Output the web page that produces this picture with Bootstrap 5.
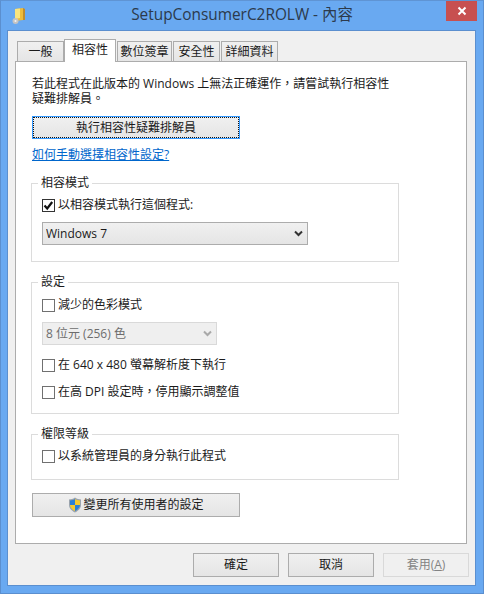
<!DOCTYPE html>
<html lang="zh-Hant">
<head>
    <meta charset="UTF-8">
    <title>SetupConsumerC2ROLW - 內容</title>
    <link href="https://cdn.jsdelivr.net/npm/bootstrap@5.3.0/dist/css/bootstrap.min.css" rel="stylesheet">
    <style>
        body {
            margin: 0;
            background: #69a9f1;
            font-family: "Open Sans", "Noto Sans CJK TC", sans-serif;
            font-size: 12px;
            color: #1a1a1a;
        }

        .win-frame {
            width: 484px;
            height: 594px;
            background: #69a9f1;
            border: 1px solid #5b8fcf;
            border-top-color: #5f94d4;
        }

        .win-title {
            height: 29px;
            position: relative;
            font-size: 15.4px;
            color: #2c3a4c;
            line-height: 28px;
            text-align: center;
        }

        .win-icon {
            position: absolute;
            left: 11px;
            top: 6px;
        }

        .win-close {
            position: absolute;
            right: 6px;
            top: 0;
            width: 31px;
            height: 20px;
            background: #c75050;
            display: flex;
            align-items: center;
            justify-content: center;
        }

        .win-client {
            margin: 0 7px 0 6px;
            height: 556px;
            background: #f0f0f0;
            border: 1px solid #5b8fcf;
            padding: 8px 9px 0 7px;
        }

        .tab-strip {
            height: 22px;
            border: 0;
            padding-left: 2px;
            gap: 0;
            align-items: flex-end;
            position: relative;
            z-index: 1;
        }

        .tab-strip .nav-link {
            height: 20px;
            margin: 0 1px 0 0;
            padding: 0;
            border: 1px solid #acacac;
            border-bottom: 0;
            border-radius: 0;
            background: linear-gradient(#f0f0f0, #e5e5e5);
            color: #1a1a1a;
            font-size: 12px;
            line-height: 20px;
            text-align: center;
        }

        .tab-strip .nav-link.active {
            height: 23px;
            margin: 0 1px -1px -1px;
            background: #fff;
            border-color: #acacac;
            color: #1a1a1a;
            line-height: 19px;
        }

        .tw-general { width: 47px; }
        .tw-compat { width: 52px; }
        .tw-sign { width: 55px; }
        .tw-safe { width: 47px; }
        .tw-detail { width: 57px; }

        .tab-body {
            width: 452px;
            height: 483px;
            background: #fff;
            border: 1px solid #acacac;
            padding: 14px 15px 0 16px;
        }

        .intro-text {
            width: 362px;
            line-height: 15px;
            margin: 0 0 10px;
        }

        .win-btn {
            background: linear-gradient(#f0f0f0, #e5e5e5);
            border: 1px solid #acacac;
            border-radius: 0;
            color: #1a1a1a;
            font-size: 12px;
            line-height: 16px;
            padding: 0;
        }

        .btn-trouble {
            display: block;
            width: 208px;
            height: 23px;
            border: 1px solid #3399ff;
            outline: 1px dotted #111;
            outline-offset: -2px;
        }

        .help-link {
            display: block;
            margin-top: 8px;
            line-height: 16px;
            color: #0066cc;
        }

        .group-box {
            width: 368px;
            margin-left: -1px;
            border: 1px solid #dcdcdc;
            padding: 0 9px 0 10px;
        }

        .group-box legend {
            float: none;
            width: auto;
            margin: 0 0 0 -4px;
            padding: 0 3px;
            font-size: 12px;
            line-height: 16px;
        }

        .group-compat { margin-top: 12px; height: 87px; }
        .group-settings { margin-top: 12px; height: 140px; }
        .group-priv { margin-top: 12px; height: 54px; }

        .chk-row {
            min-height: 13px;
            margin: 0;
            padding: 0;
            display: flex;
            align-items: center;
            gap: 3px;
            line-height: 16px;
        }

        .chk-row .form-check-input {
            float: none;
            width: 13px;
            height: 13px;
            margin: 0;
            flex: none;
            border: 1px solid #707070;
            border-radius: 0;
            opacity: 1;
        }

        .chk-row .form-check-input:checked {
            background-color: #fff;
            border-color: #333;
            background-size: 13px 13px;
            background-image: url("data:image/svg+xml,%3csvg xmlns='http://www.w3.org/2000/svg' viewBox='0 0 13 13'%3e%3cpath fill='none' stroke='%23111' stroke-width='2.2' d='M2.5 6.5l2.7 3 5-6.5'/%3e%3c/svg%3e");
        }

        .chk-row .form-check-label { opacity: 1; }

        .win-select {
            height: 23px;
            padding: 0 3px;
            border: 1px solid #acacac;
            border-radius: 0;
            font-size: 12px;
            color: #1a1a1a;
            background-color: #e9e9e9;
            background-image: url("data:image/svg+xml,%3csvg xmlns='http://www.w3.org/2000/svg' viewBox='0 0 9 7'%3e%3cpath fill='none' stroke='%23333' stroke-width='2' d='M1 1.5l3.5 3.5L8 1.5'/%3e%3c/svg%3e"), linear-gradient(#f0f0f0, #e5e5e5);
            background-position: right 4px center, 0 0;
            background-size: 9px 7px, 100% 100%;
            background-repeat: no-repeat;
        }

        .win-select:disabled {
            color: #6d6d6d;
            background-color: #efefef;
            border-color: #d9d9d9;
            background-image: url("data:image/svg+xml,%3csvg xmlns='http://www.w3.org/2000/svg' viewBox='0 0 9 7'%3e%3cpath fill='none' stroke='%23a9a9a9' stroke-width='2' d='M1 1.5l3.5 3.5L8 1.5'/%3e%3c/svg%3e");
            background-size: 9px 7px;
            background-position: right 4px center;
        }

        .sel-mode { width: 266px; margin-top: 9px; }
        .sel-color { width: 175px; margin-top: 9px; }

        .row-top { margin-top: 6px; }
        .row-first { margin-top: 7px; }
        .row-640 { margin-top: 12px; }
        .row-dpi { margin-top: 11px; }

        .btn-shield {
            width: 208px;
            height: 24px;
            margin: 13px 0 0 0;
            gap: 1px;
        }

        .dialog-btns {
            gap: 9px;
            margin: 9px 0 0 0;
            width: 454px;
        }

        .btn-dlg {
            width: 86px;
            height: 24px;
        }

        .btn-dlg:disabled {
            background: #f0f0f0;
            border-color: #d9d9d9;
            color: #838383;
            opacity: 1;
        }
    </style>
</head>
<body>
    <div class="win-frame">
        <!-- Title bar -->
        <div class="win-title">
            <svg class="win-icon" width="14" height="18" viewBox="0 0 14 18">
                <path d="M3 2L11 1V13L3 14Z" fill="#eebc3a"/>
                <path d="M3 2L8 1.500V11L3 12Z" fill="#f9e57f"/>
                <path d="M11 1L13 2V13L11 13Z" fill="#c08d2c"/>
                <circle cx="3.500" cy="14" r="3" fill="#c4c4c4"/>
                <circle cx="3.500" cy="14" r="1" fill="#f4f4f4"/>
            </svg>
            SetupConsumerC2ROLW - 內容
            <div class="win-close">
                <svg width="10" height="10" viewBox="0 0 10 10">
                    <path d="M1.500 1.500L8.500 8.500M8.500 1.500L1.500 8.500" stroke="#fff" stroke-width="2"/>
                </svg>
            </div>
        </div>

        <div class="win-client">
            <!-- Tabs -->
            <ul class="nav tab-strip">
                <li class="nav-item"><a class="nav-link tw-general" href="#">一般</a></li>
                <li class="nav-item"><a class="nav-link active tw-compat" href="#">相容性</a></li>
                <li class="nav-item"><a class="nav-link tw-sign" href="#">數位簽章</a></li>
                <li class="nav-item"><a class="nav-link tw-safe" href="#">安全性</a></li>
                <li class="nav-item"><a class="nav-link tw-detail" href="#">詳細資料</a></li>
            </ul>

            <div class="tab-body">
                <p class="intro-text">若此程式在此版本的 Windows 上無法正確運作&#65292;請嘗試執行相容性疑難排解員。</p>
                <button type="button" class="btn win-btn btn-trouble">執行相容性疑難排解員</button>
                <a class="help-link" href="#">如何手動選擇相容性設定?</a>

                <fieldset class="group-box group-compat">
                    <legend>相容模式</legend>
                    <div class="form-check chk-row row-top">
                        <input class="form-check-input" type="checkbox" id="chkCompat" checked>
                        <label class="form-check-label" for="chkCompat">以相容模式執行這個程式:</label>
                    </div>
                    <select class="form-select win-select sel-mode">
                        <option>Windows 7</option>
                    </select>
                </fieldset>

                <fieldset class="group-box group-settings">
                    <legend>設定</legend>
                    <div class="form-check chk-row row-first">
                        <input class="form-check-input" type="checkbox" id="chkColor">
                        <label class="form-check-label" for="chkColor">減少的色彩模式</label>
                    </div>
                    <select class="form-select win-select sel-color" disabled>
                        <option>8 位元 (256) 色</option>
                    </select>
                    <div class="form-check chk-row row-640">
                        <input class="form-check-input" type="checkbox" id="chk640">
                        <label class="form-check-label" for="chk640">在 640 x 480 螢幕解析度下執行</label>
                    </div>
                    <div class="form-check chk-row row-dpi">
                        <input class="form-check-input" type="checkbox" id="chkDpi">
                        <label class="form-check-label" for="chkDpi">在高 DPI 設定時&#65292;停用顯示調整值</label>
                    </div>
                </fieldset>

                <fieldset class="group-box group-priv">
                    <legend>權限等級</legend>
                    <div class="form-check chk-row row-top">
                        <input class="form-check-input" type="checkbox" id="chkAdmin">
                        <label class="form-check-label" for="chkAdmin">以系統管理員的身分執行此程式</label>
                    </div>
                </fieldset>

                <button type="button" class="btn win-btn btn-shield d-flex align-items-center justify-content-center">
                    <svg width="14" height="16" viewBox="0 0 14 16">
                        <path d="M7 .5C5 2 3 2.400 1 2.500V8c0 3.500 3 6 6 7.500 3-1.500 6-4 6-7.500V2.500C11 2.400 9 2 7 .5Z" fill="#9aa3ad"/>
                        <path d="M7 2V8H2V3.500C4 3.400 5.500 3 7 2Z" fill="#2a7fd6"/>
                        <path d="M7 2C8.500 3 10 3.400 12 3.500V8H7Z" fill="#f5c92e"/>
                        <path d="M2 8H7V14C4.500 12.800 2.200 10.800 2 8Z" fill="#f5c92e"/>
                        <path d="M7 8H12C11.800 10.800 9.500 12.800 7 14Z" fill="#2a7fd6"/>
                    </svg>
                    <span>變更所有使用者的設定</span>
                </button>
            </div>

            <!-- Dialog buttons -->
            <div class="d-flex justify-content-end dialog-btns">
                <button type="button" class="btn win-btn btn-dlg">確定</button>
                <button type="button" class="btn win-btn btn-dlg">取消</button>
                <button type="button" class="btn win-btn btn-dlg" disabled>套用(<u>A</u>)</button>
            </div>
        </div>
    </div>
    <script src="https://cdn.jsdelivr.net/npm/bootstrap@5.3.0/dist/js/bootstrap.bundle.min.js"></script>
</body>
</html>
